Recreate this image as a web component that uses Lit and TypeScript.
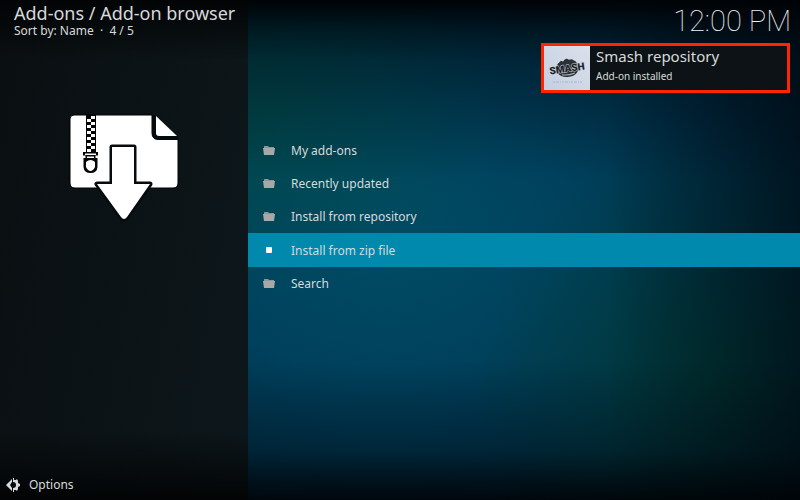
import { LitElement, html, css, svg } from "lit";
import { customElement, state } from "lit/decorators.js";
import { classMap } from "lit/directives/class-map.js";

const ENTRIES = [
  { label: "My add-ons", folder: true },
  { label: "Recently updated", folder: true },
  { label: "Install from repository", folder: true },
  { label: "Install from zip file", folder: false },
  { label: "Search", folder: true },
];

// Zipper teeth: white squares alternating between two columns.
const TEETH = Array.from({ length: 12 }, (_, i) => i);

@customElement("zip-icon")
class ZipIcon extends LitElement {
  static styles = css`
    :host { display: block; }
    .art { display: block; width: 100%; height: auto; }
  `;
  render() {
    return html`<svg class="art" viewBox="0 0 112 108" aria-hidden="true">
      <path d="M6 1H84V19Q84 25 90 25H110V69Q110 74 105 74H7Q2 74 2 69V5Q2 1 6 1Z" fill="#fff" stroke="#000" stroke-width="1"/>
      <path d="M84 1H88L110 23V26H90Q84 26 84 19Z" fill="#050a0c"/>
      <path d="M88 2L109 22H91Q88 22 88 19Z" fill="#fff"/>
      <rect x="18" y="1" width="10" height="38" fill="#050505"/>
      ${TEETH.map((i) => svg`<rect x=${i % 2 ? 19 : 23} y=${2 + i * 3} width="4" height="3" fill="#fff"/>`)}
      <path d="M15 38H30V44H29.500V53Q29 59 22.500 59Q16 59 15.500 53V44H15Z" fill="#050505"/>
      <path d="M17 39.500H28V41H17Z M19 42.500H26V44H19Z M15 41.500H17.500V44H15Z M27.500 41.500H30V44H27.500Z" fill="#fff"/>
      <path d="M18 48Q22.500 44 27 48V53Q25 57 22.500 57Q20 57 18 53Z" fill="#fff"/>
      <path d="M44 33H66V70H82L59 103Q56 107 53 103L29 70H44Z" fill="#fff" stroke="#070b0d" stroke-width="5" stroke-linejoin="round" paint-order="stroke"/>
    </svg>`;
  }
}

@customElement("smash-logo")
class SmashLogo extends LitElement {
  static styles = css`
    :host { display: block; }
    .art { display: block; width: 100%; height: 100%; }
    .word { font: 900 10px "Roboto", sans-serif; fill: #1c2226; stroke: #c3cedc; stroke-width: 1px; paint-order: stroke; }
  `;
  render() {
    return html`<svg class="art" viewBox="0 0 46 44" role="img" aria-label="Smash">
      <defs>
        <linearGradient id="paper" x1="1" y1="0" x2="0" y2="1">
          <stop offset="0" stop-color="#dce1ea"/><stop offset="1" stop-color="#c3cfe2"/>
        </linearGradient>
      </defs>
      <rect width="46" height="44" fill="url(#paper)"/>
      <g transform="rotate(-8 23 22)">
        <path d="M14 17L18 14L20 15Q23 11 26 14L29 14L33 17L34 25Q32 31 24 31Q16 31 13 26Z" fill="#2b3135"/>
        <path d="M17 28Q23 30 30 28" fill="none" stroke="#aab4c1" stroke-width="1"/>
        <text class="word" x="23" y="26" text-anchor="middle">SMASH</text>
      </g>
      <path d="M9 36H38" stroke="#a9b4c3" stroke-width="1" stroke-dasharray="2 1 3 1 1 1"/>
    </svg>`;
  }
}

@customElement("app-root")
class AppRoot extends LitElement {
  @state() private selected = 3;

  static styles = css`
    :host {
      display: block;
      font-family: "Noto Sans", sans-serif;
      font-size: 12px;
      color: #d6dadc;
    }
    .screen {
      position: relative;
      display: grid;
      grid-template-columns: 31% 1fr;
      min-height: 100vh;
      overflow: hidden;
      background: #000;
    }
    .side {
      display: flex;
      flex-direction: column;
      background:
        linear-gradient(180deg, #020405 0%, transparent 12%, transparent 86%, #020405 100%),
        linear-gradient(100deg, #0a0f11, #0d171b);
    }
    .heading { padding: 2px 0 0 14px; white-space: nowrap; }
    .title { margin: 0; font-size: 18px; line-height: 22px; font-weight: 400; }
    .sort { margin: 0; font-size: 12px; line-height: 14px; white-space: pre; }
    .art { width: 112px; margin: 76px auto 0; }
    .options {
      display: flex;
      align-items: center;
      gap: 9px;
      margin-top: auto;
      padding: 0 0 6px 6px;
      border: 0;
      background: none;
      color: inherit;
      font: inherit;
      line-height: 18px;
    }
    .gear { width: 14px; height: 14px; }
    .main {
      display: flex;
      flex-direction: column;
      background:
        linear-gradient(180deg, #000306 0%, rgba(0, 4, 8, 0.62) 6%, rgba(0, 8, 14, 0.4) 12%, transparent 36%, transparent 72%, rgba(0, 8, 14, 0.35) 90%, rgba(0, 3, 6, 0.9) 100%),
        linear-gradient(90deg, transparent 65%, rgba(0, 10, 18, 0.65) 100%),
        radial-gradient(ellipse 45% 50% at 85% 76%, rgba(0, 60, 48, 0.75), rgba(0, 60, 48, 0)),
        radial-gradient(ellipse 45% 40% at 0% 22%, rgba(0, 76, 68, 0.7), rgba(0, 76, 68, 0)),
        radial-gradient(ellipse 95% 75% at 25% 47%, #004c65 0%, #00425e 35%, #00304a 70%, #001f30 100%);
    }
    .clock {
      align-self: flex-end;
      padding: 3px 9px 0 0;
      font: 100 29px/36px "Roboto", sans-serif;
      color: #f2f4f5;
    }
    .notice {
      position: absolute;
      top: 43px;
      right: 10px;
      box-sizing: border-box;
      display: flex;
      width: 249px;
      border: 3px solid #ff2500;
      background: #0c1215;
    }
    .logo { width: 46px; height: 44px; }
    .message { padding: 0 0 0 6px; }
    .message-title { margin: 0; font-size: 15px; line-height: 20px; }
    .message-text { margin: 2px 0 0; font-size: 10px; line-height: 16px; }
    .list {
      display: grid;
      grid-auto-rows: 1fr;
      height: 167px;
      margin: 94px 0 0;
      padding: 0;
      list-style: none;
    }
    .item { display: flex; }
    .row {
      flex: 1;
      display: flex;
      align-items: center;
      gap: 16px;
      padding: 2px 0 0 15px;
      border: 0;
      background: none;
      color: inherit;
      font: inherit;
      line-height: 18px;
      text-align: left;
    }
    .row.selected { background: #0088ad; }
    .glyph { width: 12px; height: 12px; }
  `;

  render() {
    return html`<div class="screen">
      <aside class="side">
        <header class="heading">
          <h1 class="title">Add-ons / Add-on browser</h1>
          <p class="sort">Sort by: Name  ·  4 / 5</p>
        </header>
        <zip-icon class="art"></zip-icon>
        <button class="options">
          <svg class="gear" viewBox="0 0 14 14" aria-hidden="true">
            <path d="M6 1V4L4 7L6 10V13L0 7Z" fill="#d6dadc"/>
            <path d="M7 0L8 0V2L10 2L11 1L12 3L12 5L14 6V8L12 9V11L11 13L10 12H8V14H7V10Q10 10 10 7T7 4Z" fill="#d6dadc"/>
          </svg>
          <span>Options</span>
        </button>
      </aside>
      <main class="main">
        <time class="clock">12:00 PM</time>
        <ul class="list">
          ${ENTRIES.map((entry, i) => html`<li class="item">
            <button class=${classMap({ row: true, selected: i === this.selected })} @click=${() => (this.selected = i)}>
              <svg class="glyph" viewBox="0 0 12 12" aria-hidden="true">
                ${entry.folder
                  ? svg`<path d="M1 1H5L6 2H11V4H1Z" fill="#8d9697"/><path d="M0 3H12L11 10H1Z" fill="#a7a9a9"/>`
                  : svg`<rect x="3" y="2" width="6" height="6" rx="1" fill="#fff"/>`}
              </svg>
              <span>${entry.label}</span>
            </button>
          </li>`)}
        </ul>
      </main>
      <section class="notice" role="status">
        <smash-logo class="logo"></smash-logo>
        <div class="message">
          <p class="message-title">Smash repository</p>
          <p class="message-text">Add-on installed</p>
        </div>
      </section>
    </div>`;
  }
}
